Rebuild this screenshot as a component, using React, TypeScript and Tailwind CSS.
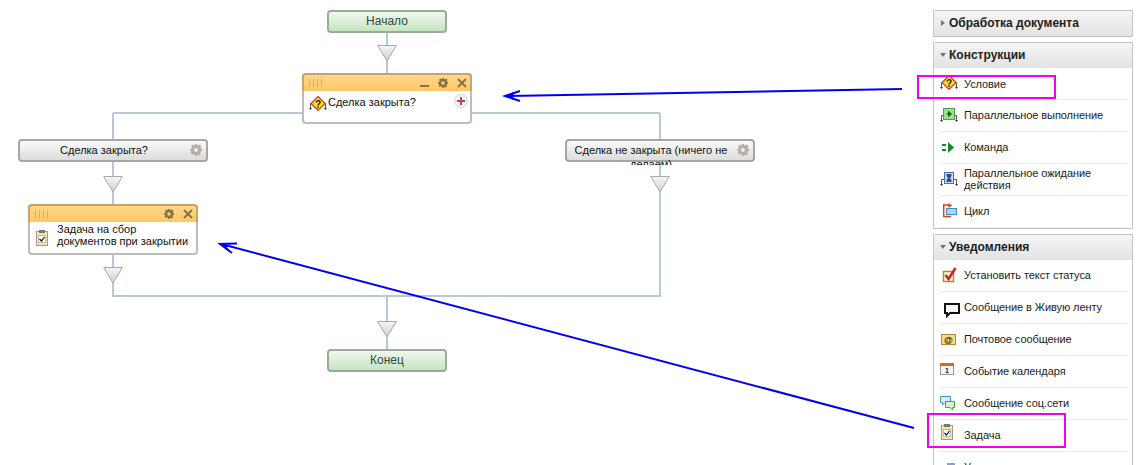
import type { ReactNode } from "react";

const font = "font-['Liberation_Sans',Arial,sans-serif]";

function Gear({ className }: { className: string }) {
  return (
    <svg viewBox="0 0 12 12" className={className}>
      <path
        fillRule="evenodd"
        d="M5 0h2l.3 1.6 1-.4L9.700.5 11.400 2.200l-.8 1.300.4 1L12 5v2l-1.400.4-.4 1 .8 1.300-1.700 1.700-1.300-.8-1 .4L7 12H5l-.4-1.600-1-.4-1.300.8L.6 9.100l.8-1.300-.4-1L0 7V5l1.600-.4.4-1L1.100 2.200 2.800.5l1.200.7 1-.4zM6 4a2 2 0 100 4 2 2 0 000-4z"
        fill="currentColor"
      />
    </svg>
  );
}

function Triangle({ x, y }: { x: number; y: number }) {
  return (
    <svg
      width="20"
      height="17"
      viewBox="0 0 20 17"
      className="absolute"
      style={{ left: x, top: y }}
    >
      <defs>
        <linearGradient id="tri" x1="0" y1="0" x2="0" y2="1">
          <stop offset="0" stopColor="#f6f6f6" />
          <stop offset="1" stopColor="#cfcfcf" />
        </linearGradient>
      </defs>
      <path d="M.7.5h18.600L10 16z" fill="url(#tri)" stroke="#a9a9a9" />
    </svg>
  );
}

function Terminal({ x, y, label }: { x: number; y: number; label: string }) {
  return (
    <div
      className="absolute flex h-[23px] w-[120px] items-center justify-center rounded-[4px] border-2 border-[#9aab97] bg-gradient-to-b from-[#f1f8ef] to-[#c5e4c1] pb-[1px] text-[12px] text-[#2f4a3a]"
      style={{ left: x, top: y }}
    >
      {label}
    </div>
  );
}

function Branch({ x, label, extra }: { x: number; label: string; extra?: string }) {
  return (
    <div
      className="absolute top-[139px] h-[23px] w-[190px] rounded-[4px] border-2 border-[#a6a6a6] bg-gradient-to-b from-[#fafafa] to-[#dcdcdc] text-[11px] leading-[14px] text-[#111]"
      style={{ left: x }}
    >
      <div className="h-[24px] w-[168px] overflow-hidden pt-[2px] text-center">
        {label}
        {extra && <div>{extra}</div>}
      </div>
      <Gear className="absolute right-[4px] top-[3px] h-3 w-3 text-[#b5b0a6]" />
    </div>
  );
}

function ActionNode({
  x,
  y,
  minimize,
  plus,
  children,
}: {
  x: number;
  y: number;
  minimize?: boolean;
  plus?: boolean;
  children: ReactNode;
}) {
  return (
    <div
      className="absolute h-[51px] w-[170px] rounded-[4px] border-2 border-[#bcbcbc] bg-white"
      style={{ left: x, top: y }}
    >
      <div className="-mx-[2px] -mt-[2px] flex h-[18px] items-center rounded-t-[4px] border-2 border-b-0 border-[#c8a468] bg-gradient-to-b from-[#ffd88a] to-[#fec766] pl-[5px] pr-[3px]">
        <div className="flex gap-[3px]">
          <span className="h-[8px] w-px bg-[#dcae68]" />
          <span className="h-[8px] w-px bg-[#dcae68]" />
          <span className="h-[8px] w-px bg-[#dcae68]" />
          <span className="h-[8px] w-px bg-[#dcae68]" />
        </div>
        <div className="ml-auto flex items-center text-[#8a7146]">
          {minimize && <span className="mr-[9px] mt-[5px] h-[2px] w-[9px] bg-[#8a7146]" />}
          <Gear className="mr-[9px] h-[10px] w-[10px]" />
          <svg viewBox="0 0 10 10" className="h-[10px] w-[10px]">
            <path d="M1 1l8 8M9 1l-8 8" stroke="currentColor" strokeWidth="2" />
          </svg>
        </div>
      </div>
      <div className="relative flex items-start text-[11px] leading-[12px] text-[#111]">
        {children}
        {plus && (
          <span className="absolute right-[2px] top-[3px] flex h-[14px] w-[14px] items-center justify-center rounded-full border border-[#d5d5d5] bg-[#f4f4f4]">
            <svg viewBox="0 0 8 8" className="h-2 w-2">
              <path d="M4 0v8M0 4h8" stroke="#c0464d" strokeWidth="2" />
            </svg>
          </span>
        )}
      </div>
    </div>
  );
}

// little split-flow legs under the structural icons
const forks = (
  <>
    <path d="M2.500 14V8.500H5M17.500 14V8.500H15" fill="none" stroke="#555" strokeWidth="1" />
    <path d="M1 13h3l-1.500 2zM16 13h3l-1.500 2z" fill="#333" />
  </>
);

function ConditionIcon() {
  return (
    <svg width="24" height="20" viewBox="0 0 24 20">
      {forks}
      <path d="M10 1.500l7 7-7 7-7-7z" fill="#fde01c" stroke="#d4381c" strokeWidth="1.200" />
      <text x="10" y="12.500" textAnchor="middle" fontSize="10" fontWeight="700" fill="#222" fontFamily="Liberation Sans">?</text>
    </svg>
  );
}

function ParallelIcon() {
  return (
    <svg width="24" height="20" viewBox="0 0 24 20">
      <g transform="translate(0 1)">{forks}</g>
      <rect x="4.500" y="2.500" width="11" height="11" fill="#9fe08f" stroke="#4e9f49" />
      <path d="M7.500 8h3.500M9.500 5.500L12.500 8l-3 2.500z" fill="#14601c" stroke="#14601c" />
    </svg>
  );
}

function CommandIcon() {
  return (
    <svg width="24" height="20" viewBox="0 0 24 20">
      <path d="M3 6h4v2H3zM3 11h4v2H3z" fill="#128a2a" />
      <path d="M9 4l6 5.500L9 15z" fill="#128a2a" />
    </svg>
  );
}

function WaitIcon() {
  return (
    <svg width="24" height="20" viewBox="0 0 24 20">
      <g transform="translate(0 1)">{forks}</g>
      <rect x="5.500" y="2.500" width="9" height="11" fill="#c9dcf4" stroke="#4a6fb0" />
      <path d="M7.500 4h5v2L11 8l1.500 2v2h-5v-2L9 8 7.500 6z" fill="#2e4f8f" />
    </svg>
  );
}

function LoopIcon() {
  return (
    <svg width="24" height="20" viewBox="0 0 24 20">
      <path d="M10 3H4.700v11.500H12" fill="none" stroke="#d9401e" strokeWidth="1.500" />
      <rect x="7.500" y="6.500" width="10" height="6" fill="#a9d7f2" stroke="#3e8fc8" />
      <path d="M9.500 1l3.500 2.500-3.500 2.500z" fill="#d9401e" />
    </svg>
  );
}

function CheckIcon() {
  return (
    <svg width="24" height="20" viewBox="0 0 24 20">
      <rect x="4.500" y="5.500" width="10" height="10" fill="#fff9e0" stroke="#b58a2c" strokeWidth="1.500" />
      <path d="M6.500 9l3 4 7-11" fill="none" stroke="#d2231f" strokeWidth="2.500" />
    </svg>
  );
}

function BubbleIcon() {
  return (
    <svg width="24" height="20" viewBox="0 0 24 20">
      <path d="M6 6h14v9H11l-3 3v-3H6z" fill="#fff" stroke="#111" strokeWidth="2" />
    </svg>
  );
}

function MailIcon() {
  return (
    <svg width="24" height="20" viewBox="0 0 24 20">
      <rect x="2.500" y="4.500" width="14" height="10" fill="#f8dc80" stroke="#b58a2c" />
      <text x="9.500" y="12.500" textAnchor="middle" fontSize="9" fontWeight="700" fill="#222" fontFamily="Liberation Sans">@</text>
    </svg>
  );
}

function CalendarIcon() {
  return (
    <svg width="24" height="20" viewBox="0 0 24 20">
      <rect x="1.500" y="1.500" width="13" height="11" fill="#f7f7f7" stroke="#999" />
      <rect x="1" y="1" width="14" height="3" fill="#d9651e" />
      <text x="8" y="11" textAnchor="middle" fontSize="7" fontWeight="700" fill="#222" fontFamily="Liberation Sans">1</text>
    </svg>
  );
}

function SocialIcon() {
  return (
    <svg width="24" height="20" viewBox="0 0 24 20">
      <path d="M1.500 2.500h10v6H6l-2.500 2.500V8.500h-2z" fill="#d5ebfb" stroke="#4d90d0" />
      <path d="M6.500 7.500h9v6h-2V16l-2.500-2.500H6.500z" fill="#d8f3cf" stroke="#3ea63a" />
    </svg>
  );
}

function TaskIcon() {
  return (
    <svg width="12" height="16" viewBox="0 0 12 16" className="block">
      <rect x=".5" y="1.500" width="11" height="14" fill="#f2e7a6" stroke="#a89d72" />
      <rect x="3" y="0" width="6" height="3" fill="#777" />
      <rect x="2.500" y="5.500" width="7" height="7" fill="#fff" stroke="#bbb" />
      <path d="M3.500 9l2 2 3-4" fill="none" stroke="#111" strokeWidth="1.200" />
    </svg>
  );
}

function UserIcon() {
  return (
    <svg width="24" height="20" viewBox="0 0 24 20">
      <path d="M3 12V8h5V5h8v7z" fill="#8c9ccc" />
    </svg>
  );
}

function Row({ icon, first, children }: { icon: ReactNode; first?: boolean; children: ReactNode }) {
  return (
    <div className="flex h-8 items-center border-b border-[#ececec]">
      <div className="w-[25px] shrink-0">{icon}</div>
      <div className={`text-[11px] leading-[12px] tracking-[-0.08px] text-[#222] ${first ? "" : "-translate-y-px"}`}>
        {children}
      </div>
    </div>
  );
}

function SectionHeader({ open, children }: { open: boolean; children: ReactNode }) {
  return (
    <div className="flex h-[25px] items-center bg-gradient-to-b from-[#f5f5f5] to-[#e3e3e3] pb-[2px] pl-[6px] text-[12px] font-bold text-[#222]">
      {open ? (
        <span className="mr-[3px] h-0 w-0 border-x-[3px] border-t-[4px] border-x-transparent border-t-[#777]" />
      ) : (
        <span className="ml-[1px] mr-[4px] h-0 w-0 border-y-[3px] border-l-[4px] border-y-transparent border-l-[#777]" />
      )}
      {children}
    </div>
  );
}

export default function App() {
  return (
    <div className={`relative flex h-[465px] w-[1143px] overflow-hidden bg-white ${font}`}>
      {/* workflow canvas */}
      <div className="relative w-[933px] shrink-0">
        <svg width="933" height="465" className="absolute left-0 top-0">
          <path
            d="M387 33V73M113 113H660M113 113V139M113 162V204M113 255V296H660V162M660 113V139M387 296V349"
            fill="none"
            stroke="#b9c7da"
            strokeWidth="2"
          />
        </svg>
        <Terminal x={327} y={10} label="Начало" />
        <Triangle x={377} y={45} />
        <ActionNode x={302} y={73} minimize plus>
          <div className="flex items-start pl-[4px] pt-[4px]">
            <div className="mr-[-4px] shrink-0"><ConditionIcon /></div>
            <span className="mt-[1px]">Сделка закрыта?</span>
          </div>
        </ActionNode>
        <Branch x={18} label="Сделка закрыта?" />
        <Branch x={565} label="Сделка не закрыта (ничего не" extra="делаем)" />
        <Triangle x={103} y={176} />
        <Triangle x={650} y={176} />
        <ActionNode x={28} y={204}>
          <div className="flex pl-[6px] pt-[1px]">
            <div className="mt-[7px] w-[21px] shrink-0"><TaskIcon /></div>
            <div>Задача на сбор<br />документов при закрытии</div>
          </div>
        </ActionNode>
        <Triangle x={103} y={267} />
        <Triangle x={377} y={321} />
        <Terminal x={327} y={349} label="Конец" />
      </div>

      {/* toolbox */}
      <div className="flex w-[200px] shrink-0 flex-col gap-[5px] pt-[10px]">
        <div className="border border-[#c4c4c4]">
          <SectionHeader open={false}>Обработка документа</SectionHeader>
        </div>
        <div className="border border-[#c4c4c4]">
          <SectionHeader open>Конструкции</SectionHeader>
          <div className="px-[5px]">
            <Row first icon={<ConditionIcon />}>Условие</Row>
            <Row icon={<ParallelIcon />}>Параллельное выполнение</Row>
            <Row icon={<CommandIcon />}>Команда</Row>
            <Row icon={<WaitIcon />}>Параллельное ожидание<br />действия</Row>
            <Row icon={<LoopIcon />}>Цикл</Row>
          </div>
        </div>
        <div className="h-[300px] shrink-0 border border-[#c4c4c4]">
          <SectionHeader open>Уведомления</SectionHeader>
          <div className="px-[5px]">
            <Row icon={<CheckIcon />}>Установить текст статуса</Row>
            <Row icon={<BubbleIcon />}>Сообщение в Живую ленту</Row>
            <Row icon={<MailIcon />}>Почтовое сообщение</Row>
            <Row icon={<CalendarIcon />}>Событие календаря</Row>
            <Row icon={<SocialIcon />}>Сообщение соц.сети</Row>
            <Row icon={<div className="mb-[7px] ml-[2px]"><TaskIcon /></div>}>Задача</Row>
            <Row icon={<UserIcon />}>Уведомление</Row>
          </div>
        </div>
      </div>

      {/* annotations */}
      <div className="absolute left-[917px] top-[75px] h-[24px] w-[139px] border-2 border-[#f000f0]" />
      <div className="absolute left-[927px] top-[413px] h-[35px] w-[139px] border-2 border-[#f000f0]" />
      <svg width="1143" height="465" className="pointer-events-none absolute left-0 top-0">
        <g fill="none" stroke="#0000f0" strokeWidth="2">
          <path d="M902 89L506 96" />
          <path d="M520 91L505 96L520 101" />
          <path d="M514 93L508 96L514 99" />
          <path d="M914 428L221 244" />
          <path d="M237 243.500L220 244L232 253" />
          <path d="M228 246L224 246L228 250" />
        </g>
      </svg>
    </div>
  );
}
